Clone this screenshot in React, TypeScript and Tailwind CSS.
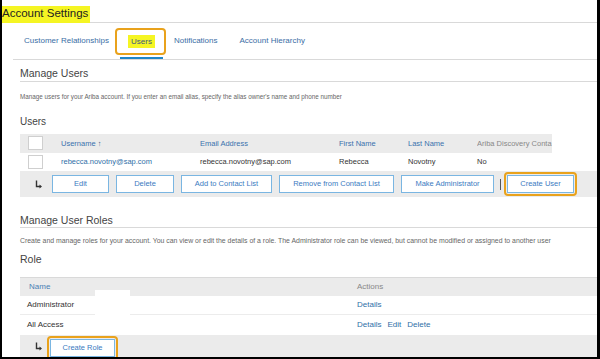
import React from "react";

const font = { fontFamily: '"Liberation Sans", Arial, sans-serif' };

const CornerArrow = () => (
  <svg width="8" height="9" viewBox="0 0 8 9" className="text-[#333]">
    <path d="M1.5 0.5V6.5H5.5" fill="none" stroke="currentColor" strokeWidth="1.4" />
    <path d="M4.5 4.5L7 6.5L4.5 8.5Z" fill="currentColor" />
  </svg>
);

interface BtnProps {
  label: string;
  w: string;
  marked?: boolean;
}

const Btn: React.FC<BtnProps> = ({ label, w, marked }) => (
  <div className={`relative h-[18px] ${w} shrink-0`}>
    <div className="h-full w-full border border-[#7ab6e2] bg-white flex items-center justify-center text-[7.5px] text-[#3b7bbf] whitespace-nowrap">
      {label}
    </div>
    {marked && (
      <div className="absolute -left-[3px] -right-[3px] -top-[3px] -bottom-[3px] border-[2.5px] border-[#e9a21c] rounded-[4px]" />
    )}
  </div>
);

const Checkbox = () => (
  <div className="w-[15px] h-[14px] bg-white border border-[#cfcfcf]" />
);

const userCols = "grid grid-cols-[41px_139px_139px_69px_69px_1fr] items-center";

export default function App() {
  return (
    <div
      className="w-[600px] h-[359px] bg-white border-l-2 border-r-[3px] border-b-2 border-black overflow-hidden flex flex-col"
      style={font}
    >
      {/* title */}
      <div className="h-[23px] shrink-0 border-b border-[#d9d9d9]">
        <span className="inline-block bg-[#f5f523] h-[17px] pr-[2px] text-[11.5px] leading-[15px] text-[#222]">
          Account Settings
        </span>
      </div>

      {/* tabs */}
      <div className="ml-[11px] h-[37px] shrink-0 border-b border-[#d9d9d9] flex items-stretch text-[8px] text-[#3a6ea5]">
        <div className="ml-[11px] flex items-center">Customer Relationships</div>
        <div className="relative ml-[11px] w-[43px] flex items-center justify-center">
          <span className="bg-[#f5f523] px-[3px] leading-[13px] text-[#3a5a80]">Users</span>
          <div className="absolute left-0 right-0 bottom-0 h-[2px] bg-[#1f86c8]" />
          <div className="absolute -left-[5px] -right-[3px] top-[5px] bottom-[4px] border-[2.5px] border-[#e9a21c] rounded-[4px]" />
        </div>
        <div className="ml-[11px] flex items-center">Notifications</div>
        <div className="ml-[22px] flex items-center">Account Hierarchy</div>
      </div>

      <div className="pl-[18px] flex flex-col min-h-0 flex-1 overflow-hidden">
        <div className="pt-[7px] pb-[2px] border-b border-[#d9d9d9] text-[10.5px] leading-[12px] text-[#444]">
          Manage Users
        </div>
        <div className="mt-[11px] text-[6.3px] leading-[8px] text-[#666] whitespace-nowrap">
          Manage users for your Ariba account. If you enter an email alias, specify the alias owner's name and phone number
        </div>
        <div className="mt-[15px] text-[10px] leading-[12px] text-[#444]">Users</div>

        {/* users table */}
        <div className="mt-[6px] w-[532px] h-[19px] bg-[#ebebeb] text-[7.5px] text-[#3a72ad] overflow-hidden">
          <div className={`${userCols} h-full`}>
            <div className="pl-[8px]"><Checkbox /></div>
            <div>Username <span className="text-[#3a5a80]">↑</span></div>
            <div>Email Address</div>
            <div>First Name</div>
            <div>Last Name</div>
            <div className="text-[#888] whitespace-nowrap overflow-hidden">Ariba Discovery Conta</div>
          </div>
        </div>
        <div className={`${userCols} w-[532px] h-[19px] text-[7.5px] text-[#333]`}>
          <div className="pl-[8px]"><Checkbox /></div>
          <div className="text-[#2f6fa7]">rebecca.novotny@sap.com</div>
          <div>rebecca.novotny@sap.com</div>
          <div>Rebecca</div>
          <div>Novotny</div>
          <div>No</div>
        </div>
        <div className="h-[26px] shrink-0 bg-[#ebebeb] flex items-center">
          <div className="ml-[15px] w-[17px]"><CornerArrow /></div>
          <div className="flex items-center gap-[7px]">
            <Btn label="Edit" w="w-[57px]" />
            <Btn label="Delete" w="w-[58px]" />
            <Btn label="Add to Contact List" w="w-[91px]" />
            <Btn label="Remove from Contact List" w="w-[115px]" />
            <Btn label="Make Administrator" w="w-[93px]" />
          </div>
          <div className="ml-[6px] w-[1px] h-[11px] bg-[#555]" />
          <div className="ml-[6px]"><Btn label="Create User" w="w-[67px]" marked /></div>
        </div>

        <div className="mt-[17px] pb-[1px] border-b border-[#d9d9d9] text-[10.5px] leading-[12px] text-[#444]">
          Manage User Roles
        </div>
        <div className="mt-[9px] text-[6.9px] leading-[8px] text-[#666] whitespace-nowrap">
          Create and manage roles for your account. You can view or edit the details of a role. The Administrator role can be viewed, but cannot be modified or assigned to another user
        </div>
        <div className="mt-[8px] text-[10.5px] leading-[12px] text-[#444]">Role</div>

        {/* role table */}
        <div className="relative mt-[12px] text-[8px]">
          <div className="h-[19px] bg-[#ebebeb] border-t border-[#d9d9d9] flex items-center">
            <div className="pl-[9px] w-[337px] text-[#4a7fb5]">Name</div>
            <div className="text-[#888]">Actions</div>
          </div>
          <div className="h-[19px] border-b border-[#ececec] flex items-center text-[#333]">
            <div className="pl-[7px] w-[337px]">Administrator</div>
            <div className="text-[#2f6fa7]">Details</div>
          </div>
          <div className="h-[20px] flex items-center text-[#333]">
            <div className="pl-[7px] w-[337px]">All Access</div>
            <div className="text-[#2f6fa7] flex gap-[6px]">
              <span>Details</span>
              <span>Edit</span>
              <span>Delete</span>
            </div>
          </div>
          <div className="h-[22px] bg-[#ebebeb] flex items-start">
            <div className="ml-[15px] mt-[7px] w-[15px]"><CornerArrow /></div>
            <div className="mt-[4px]"><Btn label="Create Role" w="w-[65px]" marked /></div>
          </div>
          <div className="absolute left-[75px] top-[13px] w-[35px] h-[25px] bg-white" />
        </div>
      </div>
    </div>
  );
}
